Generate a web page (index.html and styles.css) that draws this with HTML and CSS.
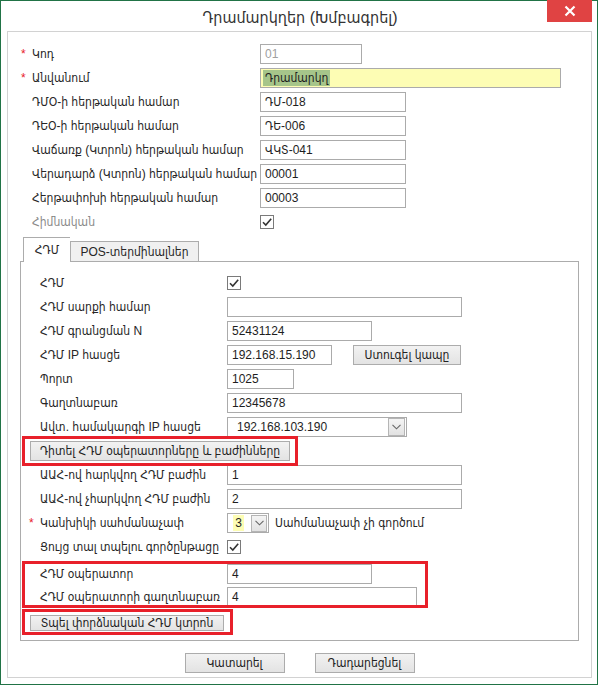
FILE: index.html
```html
<!DOCTYPE html>
<html lang="hy">
<head>
<meta charset="utf-8">
<title>Դրամարկղեր (Խմբագրել)</title>
<link rel="stylesheet" href="styles.css">
</head>
<body>
<div class="window">
  <div class="titlebar">
    <span class="title">Դրամարկղեր (Խմբագրել)</span>
    <button class="close" type="button" aria-label="close">
      <svg width="12" height="12" viewBox="0 0 12 12"><path d="M1.5 1.5 L10.5 10.5 M10.5 1.5 L1.5 10.5" stroke="#fff" stroke-width="2.2" fill="none"/></svg>
    </button>
  </div>
  <div class="panel">
    <div class="form top">
      <div class="row"><span class="label"><span class="star">*</span>Կոդ</span><div class="field w-code disabled">01</div></div>
      <div class="row"><span class="label"><span class="star">*</span>Անվանում</span><div class="field w-name yellow"><span class="sel">Դրամարկղ</span></div></div>
      <div class="row"><span class="label">ԴՄՕ-ի հերթական համար</span><div class="field w-mid">ԴՄ-018</div></div>
      <div class="row"><span class="label">ԴԵՕ-ի հերթական համար</span><div class="field w-mid">ԴԵ-006</div></div>
      <div class="row"><span class="label">Վաճառք (Կտրոն) հերթական համար</span><div class="field w-mid">ՎԿՏ-041</div></div>
      <div class="row"><span class="label">Վերադարձ (Կտրոն) հերթական համար</span><div class="field w-mid">00001</div></div>
      <div class="row"><span class="label">Հերթափոխի հերթական համար</span><div class="field w-mid">00003</div></div>
      <div class="row"><span class="label muted">Հիմնական</span><span class="check"><svg width="12" height="12" viewBox="0 0 12 12"><path d="M2 6.2 L4.8 9 L10.2 2.8" stroke="#333" stroke-width="1.6" fill="none"/></svg></span></div>
    </div>

    <div class="tabs">
      <div class="tabstrip">
        <div class="tab active">ՀԴՄ</div>
        <div class="tab">POS-տերմինալներ</div>
      </div>
      <div class="tabpanel">
        <div class="row t"><span class="label">ՀԴՄ</span><span class="check"><svg width="12" height="12" viewBox="0 0 12 12"><path d="M2 6.2 L4.8 9 L10.2 2.8" stroke="#333" stroke-width="1.6" fill="none"/></svg></span></div>
        <div class="row t"><span class="label">ՀԴՄ սարքի համար</span><div class="field w-long"></div></div>
        <div class="row t"><span class="label">ՀԴՄ գրանցման N</span><div class="field w-reg">52431124</div></div>
        <div class="row t"><span class="label">ՀԴՄ IP հասցե</span><div class="ctrl-line"><div class="field w-ip">192.168.15.190</div><button class="btn w-test" type="button">Ստուգել կապը</button></div></div>
        <div class="row t"><span class="label">Պորտ</span><div class="field w-port">1025</div></div>
        <div class="row t"><span class="label">Գաղտնաբառ</span><div class="field w-long">12345678</div></div>
        <div class="row t"><span class="label">Ավտ. համակարգի IP հասցե</span><div class="field select w-sel"><span class="sel-text">192.168.103.190</span><span class="drop"><svg width="9" height="6" viewBox="0 0 9 6"><path d="M0.5 0.8 L4.5 4.8 L8.5 0.8" stroke="#666" stroke-width="1.1" fill="none"/></svg></span></div></div>
        <div class="btn-row"><div class="hl hl-1"><button class="btn w-view" type="button">Դիտել ՀԴՄ օպերատորները և բաժինները</button></div></div>
        <div class="row t"><span class="label">ԱԱՀ-ով հարկվող ՀԴՄ բաժին</span><div class="field w-long">1</div></div>
        <div class="row t"><span class="label">ԱԱՀ-ով չհարկվող ՀԴՄ բաժին</span><div class="field w-long">2</div></div>
        <div class="row t"><span class="label"><span class="star">*</span>Կանխիկի սահմանաչափ</span><div class="ctrl-line"><div class="combo"><span class="combo-val">3</span><span class="drop small"><svg width="9" height="6" viewBox="0 0 9 6"><path d="M0.5 0.8 L4.5 4.8 L8.5 0.8" stroke="#666" stroke-width="1.1" fill="none"/></svg></span></div><span class="note">Սահմանաչափ չի գործում</span></div></div>
        <div class="row t"><span class="label">Ցույց տալ տպելու գործընթացը</span><span class="check"><svg width="12" height="12" viewBox="0 0 12 12"><path d="M2 6.2 L4.8 9 L10.2 2.8" stroke="#333" stroke-width="1.6" fill="none"/></svg></span></div>
        <div class="group hl hl-2">
          <div class="row t"><span class="label">ՀԴՄ օպերատոր</span><div class="field w-reg">4</div></div>
          <div class="row t"><span class="label">ՀԴՄ օպերատորի գաղտնաբառ</span><div class="field w-op">4</div></div>
        </div>
        <div class="btn-row print"><div class="hl hl-3"><button class="btn w-print" type="button">Տպել փորձնական ՀԴՄ կտրոն</button></div></div>
      </div>
    </div>

    <div class="actions">
      <button class="btn w-act" type="button">Կատարել</button>
      <button class="btn w-act" type="button">Դադարեցնել</button>
    </div>
  </div>
</div>
</body>
</html>
```
FILE: styles.css
```css
* { box-sizing: border-box; }

body {
  margin: 0;
  font-family: "Liberation Sans", "DejaVu Sans Condensed", "DejaVu Sans", sans-serif;
  font-size: 12px;
  color: #262626;
}

.window {
  width: 598px;
  height: 685px;
  border: 1px solid #217346;
  background: #fff;
  display: flex;
  flex-direction: column;
  position: relative;
}

.titlebar {
  height: 30px;
  display: flex;
  justify-content: center;
  align-items: center;
  position: relative;
}

.title {
  font-size: 16px;
  color: #333;
  padding-top: 2px;
  margin-left: 2px;
}

.close {
  position: absolute;
  top: -1px;
  right: 5px;
  width: 45px;
  height: 22px;
  background: #e04343;
  border: 0;
  padding: 0;
  display: flex;
  align-items: center;
  justify-content: center;
}

.panel {
  margin: 0 5px 6px 6px;
  border: 1px solid #d2d2d2;
  flex: 1;
  display: flex;
  flex-direction: column;
}

.form.top {
  padding-top: 12px;
  display: flex;
  flex-direction: column;
  gap: 4px;
}

.row {
  display: grid;
  grid-template-columns: 252px auto;
  height: 20px;
  align-items: center;
  justify-items: start;
}

.label {
  padding-left: 24px;
  white-space: nowrap;
}

.label.muted { color: #8a8a8a; }

.star {
  display: inline-block;
  width: 11px;
  margin-left: -11px;
  color: #e8202a;
}

.field {
  height: 20px;
  border: 1px solid #ababab;
  padding: 0 4px;
  display: flex;
  align-items: center;
  white-space: nowrap;
  color: #1e1e1e;
  background: #fff;
}

.field.disabled { color: #a0a0a0; }

.field.yellow {
  background: #fdfdb4;
  padding-left: 2px;
}

.sel {
  background: #a6c58a;
  padding: 1px 2px;
}

.w-code { width: 102px; }
.w-name { width: 301px; }
.w-mid { width: 146px; }

.check {
  width: 14px;
  height: 14px;
  border: 1px solid #7a7a7a;
  display: flex;
  align-items: center;
  justify-content: center;
  background: #fff;
}

/* tabs */
.tabs {
  margin: 5px 12px 0 12px;
}

.tabstrip {
  display: flex;
  align-items: flex-end;
  padding-left: 3px;
  height: 24px;
}

.tab {
  height: 20px;
  padding: 0 9px;
  border: 1px solid #acacac;
  border-bottom: 0;
  background: #f0f0f0;
  display: flex;
  align-items: center;
  white-space: nowrap;
}

.tab.active {
  height: 25px;
  margin-bottom: -1px;
  background: #fff;
  position: relative;
  z-index: 1;
  width: 47px;
  border-right: 0;
  justify-content: center;
}

.tab + .tab { width: 129px; padding-top: 1px; justify-content: center; }

.tabpanel {
  border: 1px solid #acacac;
  padding: 11px 0 9px 0;
  display: flex;
  flex-direction: column;
  gap: 4px;
}

.row.t {
  grid-template-columns: 206px auto;
}

.row.t .label { padding-left: 19px; }

.w-long { width: 235px; }
.w-reg { width: 145px; }
.w-ip { width: 105px; }
.w-port { width: 67px; }
.w-op { width: 190px; }
.w-sel { width: 180px; }

.ctrl-line {
  display: flex;
  align-items: center;
}

.btn {
  height: 20px;
  border: 1px solid #acacac;
  background: linear-gradient(#f2f2f2, #e3e3e3);
  font-family: "Liberation Sans", "DejaVu Sans Condensed", "DejaVu Sans", sans-serif;
  font-size: 12px;
  color: #222;
  padding: 0;
  white-space: nowrap;
}

.w-test { width: 108px; margin-left: 21px; }

.select {
  padding-left: 9px;
  justify-content: space-between;
  padding-right: 1px;
}

.drop {
  width: 17px;
  height: 18px;
  border: 1px solid #b5b5b5;
  background: linear-gradient(#f4f4f4, #e2e2e2);
  display: flex;
  align-items: center;
  justify-content: center;
}

.combo {
  width: 42px;
  height: 20px;
  border: 1px solid #ababab;
  display: flex;
  align-items: center;
  padding-left: 5px;
  gap: 7px;
}

.combo-val {
  background: #fdfdb4;
  width: 11px;
  height: 16px;
  display: flex;
  align-items: center;
  justify-content: center;
}

.drop.small { width: 16px; height: 17px; }

.note { margin-left: 6px; white-space: nowrap; }

.btn-row { padding-left: 9px; display: flex; }

.w-view { width: 260px; }

.hl { position: relative; }
.hl::after {
  content: "";
  position: absolute;
  border: 3px solid #e8202a;
  pointer-events: none;
}

.hl-1::after { top: -5px; left: -8px; right: -8px; bottom: -5px; }

.group {
  margin-top: 3px;
  display: flex;
  flex-direction: column;
  gap: 3px;
}

.hl-2::after { top: -3px; left: 1px; width: 400px; bottom: -1px; }

.btn-row.print { margin-top: 4px; }

.w-print { width: 194px; height: 16px; }

.hl-3::after { top: -6px; left: -8px; right: -9px; bottom: -4px; }

.actions {
  margin-top: 12px;
  display: flex;
  justify-content: center;
  gap: 30px;
}

.w-act { width: 100px; }
```
